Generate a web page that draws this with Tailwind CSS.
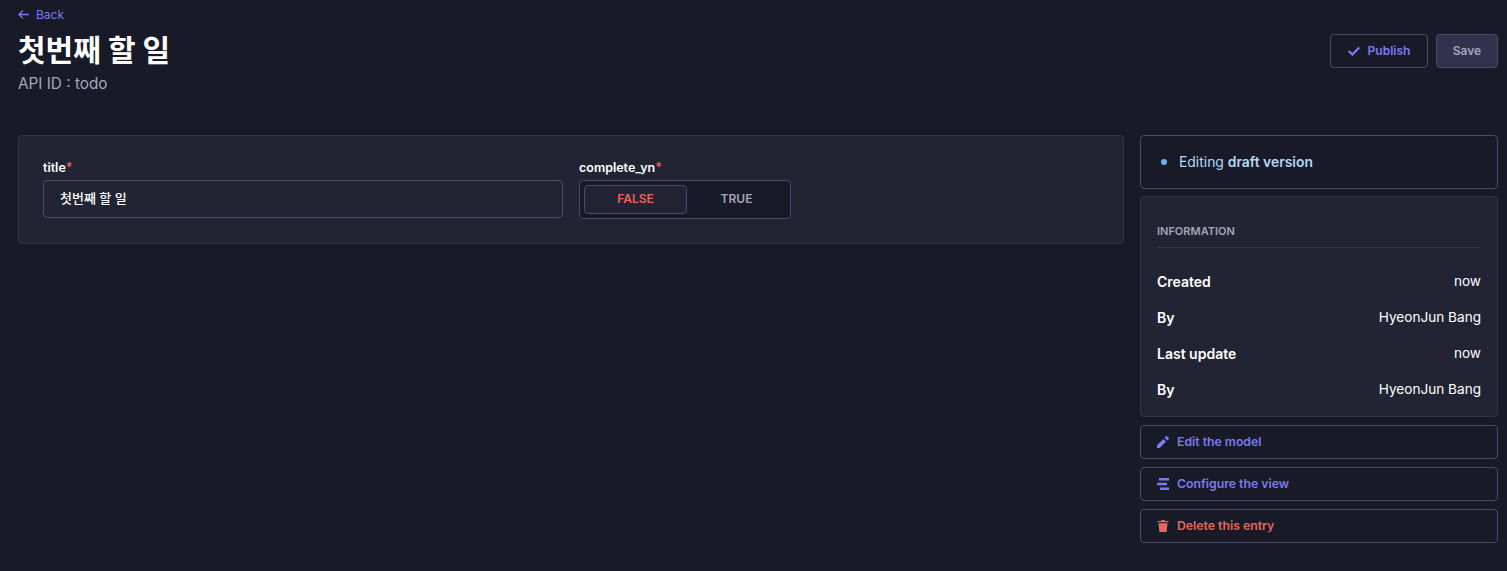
<!DOCTYPE html>
<html lang="en">
  <head>
    <meta charset="UTF-8" />
    <title>Edit entry</title>
    <script src="https://cdn.jsdelivr.net/npm/@tailwindcss/browser@4"></script>
  </head>
  <body class="bg-[#181a28] h-[571px] overflow-hidden font-['Inter','Noto_Sans_CJK_KR',sans-serif] text-white">
    <!-- header -->
    <div class="pr-[9px] pl-[18px] h-[135px]">
      <a class="flex items-center gap-[7px] h-[30px] pb-[1px] text-[12px] text-[#7b7bf0]">
        <svg class="w-[11px] h-[11px]" viewBox="0 0 11 11" fill="none" stroke="#7b7bf0" stroke-width="1.300">
          <path d="M10.800 5.500H1M5 1.400 1 5.500l4 4.100" />
        </svg>
        Back
      </a>
      <div class="flex justify-between">
        <div>
          <h1 class="text-[30px] leading-[40px] font-bold">첫번째 할 일</h1>
          <p class="text-[15.300px] leading-[27px] text-[#a5a5ba]">API ID : todo</p>
        </div>
        <div class="flex gap-[8px] mt-[4px] h-[34px]">
          <button class="flex items-center gap-[8px] w-[98px] justify-center rounded-[4px] border border-[#4a4a6a] text-[12px] font-semibold text-[#7b7bf0]">
            <svg class="w-[12px] h-[10px]" viewBox="0 0 12 10" fill="none" stroke="#7b7bf0" stroke-width="2.200">
              <path d="M.8 5l3.600 3.600L11.200 1.400" />
            </svg>
            Publish
          </button>
          <button class="w-[62px] rounded-[4px] border border-[#4a4a6a] bg-[#32324d] text-[12px] font-semibold text-[#a5a5ba]">Save</button>
        </div>
      </div>
    </div>

    <div class="flex gap-[16px] pl-[18px] pr-[9px] items-start">
      <!-- form -->
      <main class="w-[1106px] h-[109px] rounded-[4px] border border-[#32324d] bg-[#222433] px-[24px] pt-[24px] flex gap-[16px]">
        <div class="w-[520px]">
          <label class="block text-[12.500px] leading-[16px] font-semibold mb-[4px]">title<span class="text-[#e4675c]">*</span></label>
          <div class="h-[38px] rounded-[4px] border border-[#4a4a6a] px-[16px] flex items-center text-[13px] font-medium">첫번째 할 일</div>
        </div>
        <div class="w-[212px]">
          <label class="block text-[12.500px] leading-[16px] font-semibold mb-[4px]">complete_yn<span class="text-[#e4675c]">*</span></label>
          <div class="h-[39px] rounded-[4px] border border-[#4a4a6a] bg-[#181a28] p-[4px] flex text-[12px] font-semibold">
            <div class="w-[103px] rounded-[4px] border border-[#4a4a6a] bg-[#222433] text-[#e4675c] flex items-center justify-center pb-[1px]">FALSE</div>
            <div class="flex-1 text-[#a5a5ba] flex items-center justify-center pb-[1px]">TRUE</div>
          </div>
        </div>
      </main>

      <!-- sidebar -->
      <aside class="w-[358px] flex flex-col">
        <div class="h-[54px] rounded-[4px] border border-[#4a4a6a] flex items-center pl-[20px] gap-[12px] text-[13.900px] text-[#b5d8f7]">
          <span class="w-[6px] h-[6px] rounded-full bg-[#66b7f1]"></span>
          <p>Editing <b class="font-semibold">draft version</b></p>
        </div>
        <div class="mt-[7px] h-[221px] rounded-[4px] border border-[#32324d] bg-[#222433] px-[16px] pt-[24px] text-[14px]">
          <h2 class="text-[11px] leading-[20px] font-semibold text-[#a5a5ba] pb-[6px] border-b border-[#32324d]">INFORMATION</h2>
          <div class="mt-[16px] flex flex-col">
            <div class="h-[36px] flex justify-between items-center pb-[1px]"><span class="font-semibold">Created</span><span class="text-[13.600px]">now</span></div>
            <div class="h-[36px] flex justify-between items-center pb-[1px]"><span class="font-semibold">By</span><span class="text-[13.600px]">HyeonJun Bang</span></div>
            <div class="h-[36px] flex justify-between items-center pb-[1px]"><span class="font-semibold">Last update</span><span class="text-[13.600px]">now</span></div>
            <div class="h-[36px] flex justify-between items-center pb-[1px]"><span class="font-semibold">By</span><span class="text-[13.600px]">HyeonJun Bang</span></div>
          </div>
        </div>
        <div class="mt-[8px] flex flex-col gap-[8px] text-[12.250px] font-semibold">
          <a class="h-[34px] rounded-[4px] border border-[#4a4a6a] flex items-center pl-[16px] gap-[8px] text-[#7b7bf0]">
            <svg class="w-[12px] h-[12px]" viewBox="0 0 12 12" fill="#7b7bf0">
              <path d="M0 9.300V12h2.700l6.400-6.400-2.700-2.700zM11.800 2.900c.3-.3.3-.7 0-1L10.100.2c-.3-.3-.7-.3-1 0L7.500 1.800l2.700 2.700z" />
            </svg>
            Edit the model
          </a>
          <a class="h-[34px] rounded-[4px] border border-[#4a4a6a] flex items-center pl-[16px] gap-[8px] text-[#7b7bf0]">
            <svg class="w-[12px] h-[12px]" viewBox="0 0 12 12" fill="#7b7bf0">
              <path d="M2 0h10v2.600H2zM0 4.700h10v2.600H0zM3 9.400h9V12H3z" />
            </svg>
            Configure the view
          </a>
          <a class="h-[34px] rounded-[4px] border border-[#4a4a6a] flex items-center pl-[16px] gap-[8px] text-[#e4675c]">
            <svg class="w-[12px] h-[12px]" viewBox="0 0 12 12" fill="#e4675c">
              <path d="M4.400 0h3.200l.5 1h3.400v1.300H.5V1h3.400zM1.400 3.200h9.200L9.600 12H2.400z" />
            </svg>
            Delete this entry
          </a>
        </div>
      </aside>
    </div>
  </body>
</html>
